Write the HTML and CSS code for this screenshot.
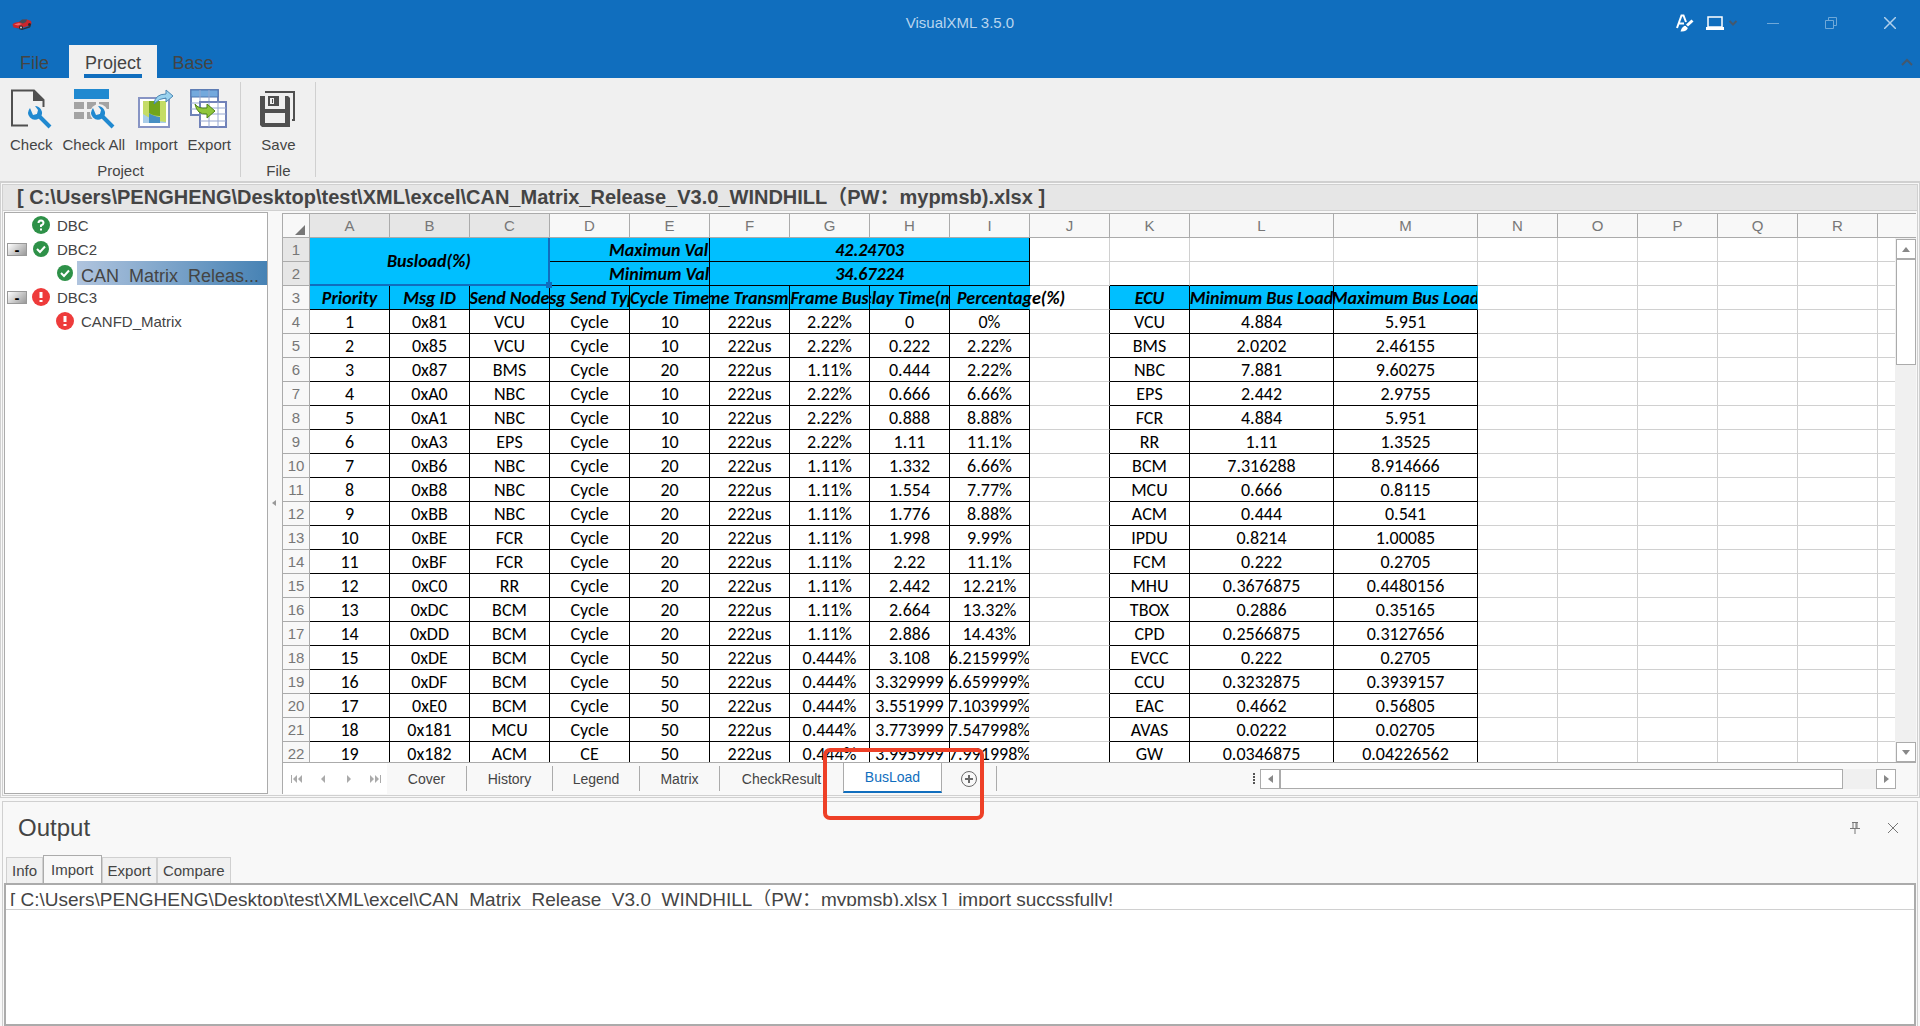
FILE: index.html
```html
<!DOCTYPE html>
<html lang="en">
<head>
  <meta charset="UTF-8" />
  <meta name="viewport" content="width=device-width, initial-scale=1.0" />
  <title>VisualXML 3.5.0</title>
  <link rel="stylesheet" href="styles.css">
</head>
<body>
  <header class="titlebar">
    <svg class="app-icon" width="20" height="11" viewBox="0 0 20 11">
      <path d="M2 8l6 2.500 11-4-1 2-8 2.500z" fill="#2b3038"/>
      <path d="M0.500 5.500Q2 3 7 3L10 1 15 0.500 19 2Q20 4 19 6L8 9.500 1.500 8.500z" fill="#c9262c"/>
      <path d="M7 3L10 0.500H15L14 3 11 4.500z" fill="#454b55"/>
      <path d="M2 5.500L7 4 10 5 6 6.500z" fill="#f2696b"/>
      <circle cx="9" cy="8.500" r="2" fill="#25282e"/><circle cx="9" cy="8.500" r="1" fill="#ccc"/>
      <circle cx="17.500" cy="5.500" r="1.500" fill="#25282e"/>
    </svg>
    <h1>VisualXML 3.5.0</h1>
    <div class="window-tools">
      <button class="tool" aria-label="Skin">
        <svg width="18" height="18" viewBox="0 0 18 18" fill="none" stroke="#fff">
          <path d="M1 14L5.500 1.500H7.500L10 8M3 9.500H8" stroke-width="2"/>
          <path d="M16.500 6.500L11 11.500" stroke-width="3"/>
          <path d="M10 11.500Q6 12 4.500 17.500Q11 18 12 13.500z" fill="#fff" stroke="none"/>
          <path d="M9 11l3.500 3" stroke="#106ebe"/>
        </svg>
      </button>
      <button class="tool" aria-label="Display">
        <svg width="32" height="14" viewBox="0 0 32 14" fill="none">
          <rect x="2" y="1" width="14" height="10" stroke="#fff" stroke-width="1.500"/>
          <path d="M0 12.500H18" stroke="#fff" stroke-width="3"/>
          <path d="M23.500 5l3.500 3.500L30.500 5" stroke="#44586d" stroke-width="2"/>
        </svg>
      </button>
      <button class="win" aria-label="Minimize">
        <svg width="12" height="12" viewBox="0 0 12 12"><path d="M0 6.500h12" stroke="#6fa8d8"/></svg>
      </button>
      <button class="win" aria-label="Restore">
        <svg width="12" height="12" viewBox="0 0 12 12" fill="none" stroke="#6fa8d8"><path d="M.5 3.500h8v8h-8zM3.500 3V.5h8v8H9"/></svg>
      </button>
      <button class="win" aria-label="Close">
        <svg width="12" height="12" viewBox="0 0 12 12"><path d="M0 0l12 12M12 0L0 12" stroke="#b0d0ec" stroke-width="1.500"/></svg>
      </button>
    </div>
  </header>

  <nav class="ribbon-tabs">
    <button>File</button>
    <button class="active"><span>Project</span></button>
    <button>Base</button>
    <button class="collapse" aria-label="Collapse ribbon">
      <svg width="12" height="8" viewBox="0 0 12 8" fill="none"><path d="M1 7l5-5 5 5" stroke="#44586d" stroke-width="2"/></svg>
    </button>
  </nav>

  <section class="ribbon">
    <div class="group">
      <div class="group-items">
        <button>
          <svg width="42" height="40" viewBox="0 0 42 40" fill="none">
            <path d="M18 36.500H2V1.500H24L33.500 11V18" stroke="#505050" stroke-width="2"/>
            <path d="M23 1v11h11z" fill="#505050"/>
            <path d="M27 25l13 13" stroke="#2089d0" stroke-width="4"/>
            <path d="M20 19q-4 5 0 9.500q4 4 9 1q5-4 2-9q-2-3.500-6-3.500l3 4-1 4-4 1z" fill="#2089d0"/>
          </svg>
          Check
        </button>
        <button>
          <svg width="42" height="40" viewBox="0 0 42 40" fill="none">
            <path d="M1 0h35v10H1z" fill="#2089d0"/>
            <path d="M1 13h10v7H1zM14 13h9v7h-9zM26 13h10v7H26zM1 23h10v7H1zM14 23h6v7h-6z" fill="#a3a3a3"/>
            <circle cx="26" cy="24" r="9" fill="#f0f0f0"/>
            <path d="M27 25l13 13" stroke="#f0f0f0" stroke-width="7"/>
            <path d="M27 25l13 13" stroke="#2089d0" stroke-width="4"/>
            <path d="M20 19q-4 5 0 9.500q4 4 9 1q5-4 2-9q-2-3.500-6-3.500l3 4-1 4-4 1z" fill="#2089d0"/>
          </svg>
          Check All
        </button>
        <button>
          <svg width="36" height="40" viewBox="0 0 36 40">
            <rect x="1" y="9" width="30" height="29" fill="#fff" stroke="#8794c4" stroke-width="2"/>
            <path d="M5 12h23v22H5z" fill="#a9cde9"/>
            <path d="M5 12h23v21q-13-1-23-8z" fill="#c5dc66"/>
            <path d="M11 12h11v15q-7 0-11-3z" fill="#72a51b"/>
            <path d="M11 24q4 3 11 4v6H11z" fill="#478fc3"/>
            <path d="M16 15q1-10 12-10V1l7 6-7 6V9q-7 0-12 6z" fill="#9bd3ef" stroke="#4b87b4"/>
          </svg>
          Import
        </button>
        <button>
          <svg width="38" height="40" viewBox="0 0 38 40">
            <path d="M1 1h27v25H1z" fill="#fff" stroke="#6e83b8" stroke-width="2"/>
            <path d="M1 1h27v7H1z" fill="#73a9dd" stroke="#4f76b0"/>
            <path d="M10 1v25M19 1v25M1 14h27M1 20h27" stroke="#96a7d0"/>
            <path d="M10 13h26v25H10z" fill="#fff" stroke="#7182b9" stroke-width="2"/>
            <path d="M19 13v25M28 13v25M10 19h26M10 25h26M10 32h26" stroke="#96a7d0"/>
            <path d="M5 15q3 5 12 4v-4l8 7-8 7v-4Q7 26 5 15z" fill="#8fc63b" stroke="#4f8417"/>
          </svg>
          Export
        </button>
      </div>
      <p>Project</p>
    </div>
    <div class="group">
      <div class="group-items">
        <button>
          <svg width="36" height="40" viewBox="0 0 36 40">
            <path d="M6 4V3h28v28h-2" fill="none" stroke="#505050" stroke-width="2"/>
            <path d="M0 7h5v13h20V7h3l2 2v29H2l-2-2zM5 24v10h20V24z" fill="#505050" fill-rule="evenodd"/>
            <path d="M8 7h11v10H8z" fill="#505050"/>
            <path d="M10 9h4v6h-4z" fill="#f0f0f0"/>
            <path d="M12 10h1v4h-1z" fill="#505050"/>
          </svg>
          Save
        </button>
      </div>
      <p>File</p>
    </div>
  </section>

  <main class="workspace">
    <div class="document">
      <h2 class="path">[ C:\Users\PENGHENG\Desktop\test\XML\excel\CAN_Matrix_Release_V3.0_WINDHILL（PW：mypmsb).xlsx ]</h2>
      <div class="panes">
        <ul class="tree">
          <li>
            <svg class="status" viewBox="0 0 18 18"><circle cx="9" cy="9" r="9" fill="#2e9148"/><path d="M6.500 7q0-2.500 2.500-2.500T11.500 7Q11.500 8.500 9 9.500v1.500M9 12.500v2" fill="none" stroke="#fff" stroke-width="2"/></svg>
            <span>DBC</span>
          </li>
          <li>
            <button aria-label="Collapse DBC2">-</button>
            <svg class="status" viewBox="0 0 18 18"><circle cx="9" cy="9" r="8" fill="#2e9148"/><path d="M5 9l3 3 5-5.500" fill="none" stroke="#fff" stroke-width="2"/></svg>
            <span>DBC2</span>
          </li>
          <li class="child">
            <svg class="status" viewBox="0 0 18 18"><circle cx="9" cy="9" r="8" fill="#2e9148"/><path d="M5 9l3 3 5-5.500" fill="none" stroke="#fff" stroke-width="2"/></svg>
            <span class="selected">CAN_Matrix_Releas...</span>
          </li>
          <li>
            <button aria-label="Collapse DBC3">-</button>
            <svg class="status" viewBox="0 0 18 18"><circle cx="9" cy="9" r="9" fill="#ee3b3b"/><path d="M9 4v6M9 12v2" stroke="#fff" stroke-width="3"/></svg>
            <span>DBC3</span>
          </li>
          <li class="child">
            <svg class="status" viewBox="0 0 18 18"><circle cx="9" cy="9" r="9" fill="#ee3b3b"/><path d="M9 4v6M9 12v2" stroke="#fff" stroke-width="3"/></svg>
            <span>CANFD_Matrix</span>
          </li>
        </ul>
        <div class="splitter"><svg width="4" height="6" viewBox="0 0 4 6"><path d="M4 0v6L0 3z" fill="#999"/></svg></div>

        <div class="sheet">
          <div class="grid">
            <table>
              <colgroup>
                <col class="c-row"><col span="11" class="c-std"><col span="2" class="c-wide"><col span="6" class="c-std">
              </colgroup>
              <thead>
                <tr>
                  <th class="corner"><svg width="10" height="10" viewBox="0 0 10 10"><path d="M10 0v10H0z" fill="#777"/></svg></th>
                  <th class="on">A</th><th class="on">B</th><th class="on">C</th><th>D</th><th>E</th><th>F</th><th>G</th><th>H</th><th>I</th><th>J</th><th>K</th><th>L</th><th>M</th><th>N</th><th>O</th><th>P</th><th>Q</th><th>R</th><th></th>
                </tr>
              </thead>
              <tbody id="rows">
                <tr>
                  <th class="on">1</th>
                  <td class="box fill picked" colspan="3" rowspan="2">Busload(%)</td>
                  <td class="box fill label" colspan="2">Maximun Val</td>
                  <td class="box fill" colspan="4">42.24703</td>
                  <td></td><td></td><td></td><td></td><td></td><td></td><td></td><td></td><td></td><td></td>
                </tr>
                <tr>
                  <th class="on">2</th>
                  <td class="box fill label" colspan="2">Minimum Val</td>
                  <td class="box fill" colspan="4">34.67224</td>
                  <td></td><td class="under"></td><td class="under"></td><td class="under"></td><td></td><td></td><td></td><td></td><td></td><td></td>
                </tr>
                <tr>
                  <th>3</th>
                  <td class="box fill"><span>Priority</span></td>
                  <td class="box fill"><span>Msg ID</span></td>
                  <td class="box fill"><span>Send Node</span></td>
                  <td class="box fill"><span>Msg Send Type</span></td>
                  <td class="box fill"><span>Cycle Time</span></td>
                  <td class="box fill"><span>me Transmi</span></td>
                  <td class="box fill"><span>Frame Bus</span></td>
                  <td class="box fill"><span>Delay Time(ms)</span></td>
                  <td class="box fill spill">Percentage(%)</td>
                  <td class="edge"></td>
                  <td class="box fill"><span>ECU</span></td>
                  <td class="box fill"><span>Minimum Bus Load</span></td>
                  <td class="box fill last"><span>Maximum Bus Load</span></td>
                  <td></td><td></td><td></td><td></td><td></td><td></td>
                </tr>
              </tbody>
            </table>
            <div class="scroll vertical">
              <button aria-label="Scroll up"><svg width="8" height="5" viewBox="0 0 8 5"><path d="M0 5h8L4 0z" fill="#888"/></svg></button>
              <div class="thumb"></div>
              <button aria-label="Scroll down"><svg width="8" height="5" viewBox="0 0 8 5"><path d="M0 0h8L4 5z" fill="#888"/></svg></button>
            </div>
          </div>
          <div class="sheet-bar">
            <div class="sheet-nav">
              <button aria-label="First sheet"><svg width="12" height="8" viewBox="0 0 12 8" fill="#aaa"><path d="M0 0h1v8H0zM6 0v8L2 4zM11 0v8L7 4z"/></svg></button>
              <button aria-label="Previous sheet"><svg width="12" height="8" viewBox="0 0 12 8" fill="#aaa"><path d="M8 0v8L4 4z"/></svg></button>
              <button aria-label="Next sheet"><svg width="12" height="8" viewBox="0 0 12 8" fill="#aaa"><path d="M4 0v8l4-4z"/></svg></button>
              <button aria-label="Last sheet"><svg width="12" height="8" viewBox="0 0 12 8" fill="#aaa"><path d="M11 0h1v8h-1zM1 0v8l4-4zM6 0v8l4-4z"/></svg></button>
            </div>
            <div class="sheet-tabs">
              <button>Cover</button>
              <button>History</button>
              <button>Legend</button>
              <button>Matrix</button>
              <button class="wide">CheckResult</button>
              <div class="marked"><button class="active">BusLoad</button></div>
              <button class="add" aria-label="Add sheet"><svg width="18" height="18" viewBox="0 0 18 18" fill="none" stroke="#6a6a6a"><circle cx="9" cy="9" r="7.500"/><path d="M9 5v8M5 9h8" stroke-width="2"/></svg></button>
            </div>
            <div class="dots"><i></i><i></i><i></i><i></i></div>
            <div class="scroll horizontal">
              <button aria-label="Scroll left"><svg width="5" height="8" viewBox="0 0 5 8"><path d="M5 0v8L0 4z" fill="#888"/></svg></button>
              <div class="thumb"></div>
              <button aria-label="Scroll right"><svg width="5" height="8" viewBox="0 0 5 8"><path d="M0 0v8l5-4z" fill="#888"/></svg></button>
            </div>
          </div>
        </div>
      </div>
    </div>
  </main>

  <section class="output">
    <div class="output-head">
      <h2>Output</h2>
      <button aria-label="Pin"><svg width="10" height="12" viewBox="0 0 10 12" fill="none" stroke="#777"><path d="M2 .5h6M3 1v5M7 1v5M6 1v5M0 6.500h10M5 7v5"/></svg></button>
      <button aria-label="Close output"><svg width="10" height="10" viewBox="0 0 10 10"><path d="M0 0l10 10M10 0L0 10" stroke="#777"/></svg></button>
    </div>
    <div class="output-tabs">
      <button>Info</button>
      <button class="active">Import</button>
      <button>Export</button>
      <button>Compare</button>
    </div>
    <div class="log">
      <div class="log-row"><p>[ C:\Users\PENGHENG\Desktop\test\XML\excel\CAN_Matrix_Release_V3.0_WINDHILL（PW：mypmsb).xlsx ]&nbsp; import succssfully!</p></div>
    </div>
  </section>

  <script src="script.js"></script>
</body>
</html>
```
FILE: styles.css
```css
* {
  box-sizing: border-box;
}

body {
  margin: 0;
  height: 100vh;
  overflow: hidden;
  display: flex;
  flex-direction: column;
  background: #f8f8f8;
  color: #444;
  font-family: "Liberation Sans", "Noto Sans CJK SC", sans-serif;
  font-size: 15px;
}

h1, h2, p, ul {
  margin: 0;
  padding: 0;
  font-weight: normal;
}

button {
  margin: 0;
  padding: 0;
  border: none;
  background: none;
  color: inherit;
  font: inherit;
}

svg {
  display: block;
}

/* title bar */
.titlebar {
  display: grid;
  grid-template-columns: 1fr auto 1fr;
  align-items: center;
  height: 45px;
  flex: none;
  background: #106ebe;
}

.app-icon {
  margin: 4px 0 0 12px;
}

.titlebar h1 {
  font-size: 15px;
  color: #b9d5ee;
}

.window-tools {
  display: flex;
  justify-content: flex-end;
  align-items: center;
}

.tool {
  margin-right: 12px;
}

.tool + .tool {
  margin-right: 6px;
}

.window-tools .win {
  width: 58px;
  display: flex;
  justify-content: center;
}

.window-tools .win:last-child {
  width: 60px;
}

/* ribbon */
.ribbon-tabs {
  display: flex;
  height: 33px;
  flex: none;
  background: #106ebe;
  font-size: 18px;
}

.ribbon-tabs button {
  width: 69px;
  padding-top: 3px;
}

.ribbon-tabs .active {
  width: 88px;
  background: #f0f0f0;
}

.ribbon-tabs .active span {
  display: block;
  margin: 0 15px;
  height: 30px;
  line-height: 30px;
  border-bottom: 4px solid #106ebe;
}

.ribbon-tabs .active + button {
  width: 72px;
}

.ribbon-tabs .collapse {
  width: 26px;
  padding: 0 7px;
  margin-left: auto;
}

.ribbon {
  display: flex;
  height: 103px;
  padding: 4px 0;
  flex: none;
  background: #f0f0f0;
}

.group {
  padding: 7px 9px 0 10px;
  border-right: 1px solid #d0d0d0;
  text-align: center;
}

.group-items {
  display: flex;
  justify-content: center;
  gap: 10px;
}

.group-items button {
  line-height: 18px;
}

.group-items svg {
  margin: 0 auto 7px;
}

.group p {
  margin-top: 8px;
  line-height: 18px;
}

.group + .group {
  min-width: 75px;
}

/* workspace */
.workspace {
  flex: 1;
  min-height: 0;
  border: 1px solid #d0d0d0;
  border-top-width: 2px;
  padding: 1px;
}

.document {
  height: 100%;
  display: flex;
  flex-direction: column;
  border: 1px solid #d0d0d0;
}

.path {
  height: 26px;
  flex: none;
  padding-left: 14px;
  background: #e6e6e6;
  border-bottom: 1px solid #d0d0d0;
  font-size: 20px;
  font-weight: bold;
  line-height: 25px;
  white-space: pre;
}

.panes {
  flex: 1;
  min-height: 0;
  display: flex;
  padding: 1px;
}

.tree {
  width: 264px;
  flex: none;
  background: #fff;
  border: 1px solid #ababab;
  list-style: none;
}

.tree li {
  display: flex;
  align-items: center;
  height: 24px;
  padding-left: 27px;
}

.tree li.child {
  padding-left: 51px;
}

.tree .status {
  width: 18px;
  height: 18px;
  flex: none;
  margin-right: 7px;
}

.tree button {
  width: 20px;
  height: 13px;
  margin: 0 5px 0 -25px;
  background: linear-gradient(135deg, #fff, #999);
  border: 1px solid #999;
  color: #000;
  font-weight: bold;
  line-height: 11px;
}

.tree .selected {
  flex: 1;
  height: 24px;
  margin-left: -4px;
  padding-left: 4px;
  background: linear-gradient(90deg, #b0c4de, #4682b4);
  font-size: 18px;
  line-height: 30px;
  white-space: nowrap;
  overflow: hidden;
}

.splitter {
  width: 14px;
  padding-right: 2px;
  flex: none;
  display: grid;
  place-items: center;
}

.sheet {
  flex: 1;
  min-width: 0;
  display: flex;
  flex-direction: column;
}

.grid {
  position: relative;
  flex: 1;
  min-height: 0;
  margin-top: 1px;
  background: #fff;
  border: 1px solid #ababab;
  border-right: none;
  overflow: hidden;
}

table {
  width: 1675px;
  table-layout: fixed;
  border-collapse: separate;
  border-spacing: 0;
}

.c-row {
  width: 27px;
}

.c-std {
  width: 80px;
}

.c-wide {
  width: 144px;
}

th, td {
  height: 24px;
  padding: 0;
  overflow: hidden;
  text-align: center;
  line-height: 22px;
  white-space: nowrap;
}

th {
  padding-top: 1px;
  background: #f8f8f8;
  border-right: 1px solid #ababab;
  border-bottom: 1px solid #ababab;
  color: #777;
  font-size: 15px;
  font-weight: normal;
}

th.on {
  background: #e6e6e6;
}

.corner svg {
  margin: 7px 4px 0 auto;
}

td {
  border-right: 1px solid #d0d0d0;
  border-bottom: 1px solid #d0d0d0;
  color: #000;
  font-family: Carlito, Lato, sans-serif;
  font-size: 18px;
}

td span {
  display: flex;
  justify-content: center;
}

td.box {
  border-color: #000;
}

td.fill {
  background: #00bfff;
  font-weight: bold;
  font-style: italic;
}

td.label {
  padding-left: 59px;
  text-align: left;
}

td.picked {
  position: relative;
  overflow: visible;
  border-right: 2px solid #106ebe;
  border-bottom: 2px solid #106ebe;
}

/* fill handle of the selection */
td.picked::after {
  content: "";
  position: absolute;
  right: -4px;
  bottom: -4px;
  width: 6px;
  height: 6px;
  background: #106ebe;
}

td.under {
  border-bottom-color: #000;
}

td.edge {
  border-right-color: #000;
}

td.open {
  border-right-color: #fff;
}

td.spill {
  padding-left: 7px;
  border-right-color: #00bfff;
  overflow: visible;
  text-align: left;
}

td.last {
  border-right-color: #00bfff;
}

/* scroll bars */
.scroll {
  display: flex;
  background: #f0f0f0;
}

.scroll button {
  width: 20px;
  height: 20px;
  flex: none;
  display: grid;
  place-items: center;
  background: #fff;
  border: 1px solid #ababab;
}

.scroll .thumb {
  background: #fff;
  border: 1px solid #ababab;
}

.scroll.vertical {
  position: absolute;
  top: 24px;
  right: 0;
  bottom: 0;
  flex-direction: column;
  padding: 1px 0 0 1px;
}

.vertical .thumb {
  height: 106px;
}

.scroll button:last-child {
  margin-top: auto;
}

.scroll.horizontal {
  width: 636px;
  margin-right: 20px;
}

.horizontal .thumb {
  width: 563px;
}

.horizontal button:last-child {
  margin: 0 0 0 auto;
}

/* sheet tabs */
.sheet-bar {
  display: flex;
  align-items: center;
  height: 31px;
  flex: none;
  font-size: 14px;
}

.sheet-nav {
  display: flex;
  align-items: center;
  gap: 14px;
  width: 105px;
  height: 31px;
  padding-left: 8px;
  background: #fff;
  border-left: 1px solid #ababab;
}

.sheet-tabs {
  display: flex;
  align-items: center;
  height: 31px;
}

.sheet-tabs button {
  width: 80px;
  height: 25px;
  border-right: 1px solid #ababab;
}

.sheet-tabs button:nth-child(2) {
  width: 86px;
}

.sheet-tabs button:nth-child(3) {
  width: 87px;
}

.sheet-tabs .wide {
  width: 123px;
  border-right: none;
}

.sheet-tabs .active {
  width: 99px;
  height: 30px;
  margin-bottom: 1px;
  background: #fff;
  border: 1px solid #ababab;
  border-top: none;
  border-bottom: 2px solid #106ebe;
  color: #106ebe;
}

.marked {
  position: relative;
}

/* highlight drawn round the current tab */
.marked::after {
  content: "";
  position: absolute;
  z-index: 1;
  top: -15px;
  left: -20px;
  box-sizing: border-box;
  width: 161px;
  height: 72px;
  border: 4px solid #ee4027;
  border-radius: 7px;
}

.sheet-tabs .add {
  display: flex;
  align-items: center;
  width: 55px;
  padding-left: 18px;
}

.dots {
  display: grid;
  gap: 1px;
  margin: 0 5px 0 auto;
}

.dots i {
  width: 2px;
  height: 2px;
  background: #555;
}

/* output */
.output {
  height: 225px;
  flex: none;
  display: flex;
  flex-direction: column;
  margin: 3px 2px 0;
  padding: 0 1px;
  border: 1px solid #d0d0d0;
  border-bottom: none;
}

.output-head {
  display: flex;
  align-items: center;
  gap: 28px;
  height: 53px;
  padding: 0 18px 2px 14px;
}

.output-head h2 {
  flex: 1;
  font-size: 24px;
}

.output-tabs {
  display: flex;
  align-items: flex-end;
  height: 28px;
  padding-left: 2px;
}

.output-tabs button {
  height: 26px;
  padding: 0 5px;
  background: #f0f0f0;
  border: 1px solid #d0d0d0;
  border-bottom: none;
}

.output-tabs .active {
  height: 28px;
  padding: 0 7px;
  background: #f8f8f8;
  border-color: #ababab;
}

.log {
  flex: 1;
  background: #fff;
  border: 2px solid #ababab;
}

.log-row {
  height: 25px;
  border-bottom: 1px solid #d0d0d0;
}

.log-row p {
  height: 21px;
  padding-left: 4px;
  overflow: hidden;
  font-size: 19px;
  line-height: 30px;
  white-space: nowrap;
}
```
FILE: script.js
```js
// columns A-I
const messages = [
  ["1", "0x81", "VCU", "Cycle", "10", "222us", "2.22%", "0", "0%"],
  ["2", "0x85", "VCU", "Cycle", "10", "222us", "2.22%", "0.222", "2.22%"],
  ["3", "0x87", "BMS", "Cycle", "20", "222us", "1.11%", "0.444", "2.22%"],
  ["4", "0xA0", "NBC", "Cycle", "10", "222us", "2.22%", "0.666", "6.66%"],
  ["5", "0xA1", "NBC", "Cycle", "10", "222us", "2.22%", "0.888", "8.88%"],
  ["6", "0xA3", "EPS", "Cycle", "10", "222us", "2.22%", "1.11", "11.1%"],
  ["7", "0xB6", "NBC", "Cycle", "20", "222us", "1.11%", "1.332", "6.66%"],
  ["8", "0xB8", "NBC", "Cycle", "20", "222us", "1.11%", "1.554", "7.77%"],
  ["9", "0xBB", "NBC", "Cycle", "20", "222us", "1.11%", "1.776", "8.88%"],
  ["10", "0xBE", "FCR", "Cycle", "20", "222us", "1.11%", "1.998", "9.99%"],
  ["11", "0xBF", "FCR", "Cycle", "20", "222us", "1.11%", "2.22", "11.1%"],
  ["12", "0xC0", "RR", "Cycle", "20", "222us", "1.11%", "2.442", "12.21%"],
  ["13", "0xDC", "BCM", "Cycle", "20", "222us", "1.11%", "2.664", "13.32%"],
  ["14", "0xDD", "BCM", "Cycle", "20", "222us", "1.11%", "2.886", "14.43%"],
  ["15", "0xDE", "BCM", "Cycle", "50", "222us", "0.444%", "3.108", "6.215999%"],
  ["16", "0xDF", "BCM", "Cycle", "50", "222us", "0.444%", "3.329999", "6.659999%"],
  ["17", "0xE0", "BCM", "Cycle", "50", "222us", "0.444%", "3.551999", "7.103999%"],
  ["18", "0x181", "MCU", "Cycle", "50", "222us", "0.444%", "3.773999", "7.547998%"],
  ["19", "0x182", "ACM", "CE", "50", "222us", "0.444%", "3.995999", "7.991998%"]
];

// columns K-M
const ecus = [
  ["VCU", "4.884", "5.951"],
  ["BMS", "2.0202", "2.46155"],
  ["NBC", "7.881", "9.60275"],
  ["EPS", "2.442", "2.9755"],
  ["FCR", "4.884", "5.951"],
  ["RR", "1.11", "1.3525"],
  ["BCM", "7.316288", "8.914666"],
  ["MCU", "0.666", "0.8115"],
  ["ACM", "0.444", "0.541"],
  ["IPDU", "0.8214", "1.00085"],
  ["FCM", "0.222", "0.2705"],
  ["MHU", "0.3676875", "0.4480156"],
  ["TBOX", "0.2886", "0.35165"],
  ["CPD", "0.2566875", "0.3127656"],
  ["EVCC", "0.222", "0.2705"],
  ["CCU", "0.3232875", "0.3939157"],
  ["EAC", "0.4662", "0.56805"],
  ["AVAS", "0.0222", "0.02705"],
  ["GW", "0.0346875", "0.04226562"]
];

const body = document.getElementById("rows");

messages.forEach((msg, i) => {
  const tr = document.createElement("tr");
  let html = `<th>${i + 4}</th>`;
  msg.forEach(v => {
    // values too long for the column lose the right border
    html += `<td class="box${v.length > 8 ? " open" : ""}"><span>${v}</span></td>`;
  });
  html += '<td class="edge"></td>';
  ecus[i].forEach(v => html += `<td class="box"><span>${v}</span></td>`);
  html += "<td></td>".repeat(6);
  tr.innerHTML = html;
  body.appendChild(tr);
});
```
